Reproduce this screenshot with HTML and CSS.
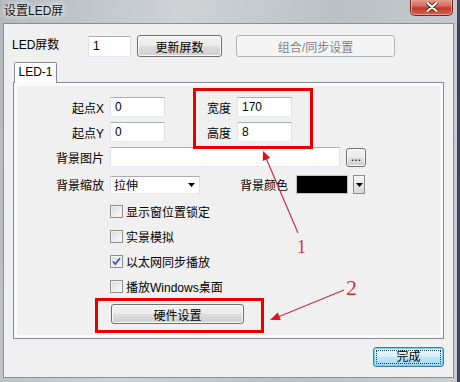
FILE: index.html
```html
<!DOCTYPE html>
<html lang="zh-CN">
<head>
  <meta charset="UTF-8">
  <link rel="stylesheet" href="styles.css">
  <title>设置LED屏</title>
</head>
<body>
  <div class="window">
    <div class="titlebar">
      <span class="title">设置LED屏</span>
      <span class="close-btn">
        <svg width="12" height="10" viewBox="0 0 12 10">
          <path d="M1.5 1 L10.5 9 M10.5 1 L1.5 9" stroke="#5a2018" stroke-width="4" stroke-linecap="round"/>
          <path d="M1.5 1 L10.5 9 M10.5 1 L1.5 9" stroke="#fff" stroke-width="2.2" stroke-linecap="round"/>
        </svg>
      </span>
    </div>

    <div class="client">
      <div class="top-row">
        <span class="top-label">LED屏数</span>
        <input class="field field-count" value="1">
        <button class="btn btn-refresh">更新屏数</button>
        <button class="btn btn-sync" disabled>组合/同步设置</button>
      </div>

      <div class="tabs">
        <div class="tab">LED-1</div>
      </div>

      <div class="panel">
        <div class="row">
          <span class="lbl">起点X</span>
          <input class="field w55" value="0">
          <span class="lbl-size">宽度</span>
          <input class="field w55" value="170">
        </div>
        <div class="row gap5">
          <span class="lbl">起点Y</span>
          <input class="field w55" value="0">
          <span class="lbl-size">高度</span>
          <input class="field w55" value="8">
        </div>
        <div class="row gap5">
          <span class="lbl">背景图片</span>
          <input class="field w230" value="">
          <button class="btn btn-browse">...</button>
        </div>
        <div class="row gap8">
          <span class="lbl">背景缩放</span>
          <div class="combo">
            <span>拉伸</span>
            <svg width="7" height="4" viewBox="0 0 7 4"><path d="M0 0 H7 L3.5 4 Z" fill="#000"/></svg>
          </div>
          <span class="lbl-color">背景颜色</span>
          <div class="swatch"></div>
          <div class="drop">
            <svg width="7" height="4" viewBox="0 0 7 4"><path d="M0 0 H7 L3.5 4 Z" fill="#000"/></svg>
          </div>
        </div>

        <div class="checks">
          <div class="check"><span class="box"></span>显示窗位置锁定</div>
          <div class="check"><span class="box"></span>实景模拟</div>
          <div class="check">
            <span class="box">
              <svg width="11" height="11" viewBox="0 0 11 11"><path d="M2 5.5 L4.3 8 L9 2.2" fill="none" stroke="#3c5a98" stroke-width="1.8"/></svg>
            </span>以太网同步播放
          </div>
          <div class="check"><span class="box"></span>播放Windows桌面</div>
        </div>

        <div class="hw-row">
          <button class="btn btn-hw">硬件设置</button>
        </div>
      </div>

      <div class="footer">
        <button class="btn btn-default"><span class="focus">完成</span></button>
      </div>
    </div>
  </div>

  <!-- red marks drawn over the dialog -->
  <svg class="marks" width="460" height="382" viewBox="0 0 460 382">
    <rect x="194.5" y="89.5" width="117" height="58" fill="none" stroke="#e60000" stroke-width="3"/>
    <rect x="96.5" y="299.5" width="166" height="32" fill="none" stroke="#e60000" stroke-width="3"/>
    <line x1="298" y1="233" x2="266" y2="158" stroke="#c8304c" stroke-width="1.2"/>
    <polygon points="263,151 270.2,157.7 262.8,160.9" fill="#e8101c"/>
    <line x1="344" y1="290" x2="278" y2="317" stroke="#c8304c" stroke-width="1.2"/>
    <polygon points="270,320 280.8,319.9 277.8,312.5" fill="#e8101c"/>
    <text class="mark-num" x="301.5" y="253" font-size="18">1</text>
    <text class="mark-num" x="351.5" y="295" font-size="22">2</text>
  </svg>
</body>
</html>
```

FILE: styles.css
```css
body {
  margin: 0;
  width: 460px;
  height: 382px;
  overflow: hidden;
  position: relative;
  background: #3e4368;
  font-family: "Liberation Sans", "Noto Sans CJK SC", sans-serif;
  font-size: 12px;
  color: #000;
}

/* glass frame */
.window {
  width: 457px;
  height: 382px;
  background: linear-gradient(100deg, #b3b8bd 0%, #cfd3d6 35%, #bbc0c4 65%, #cbced1 100%);
}

.titlebar {
  height: 23px;
  display: flex;
  justify-content: space-between;
  align-items: flex-start;
}

.title {
  margin: 4px 0 0 4px;
  line-height: 15px;
  color: #151515;
  text-shadow: 0 0 5px #fff, 0 0 8px #fff;
}

.close-btn {
  width: 43px;
  height: 17px;
  margin: -1px 4px 0 0;
  box-sizing: border-box;
  border: 1px solid #6b2a20;
  border-top: none;
  border-radius: 0 0 5px 5px;
  background: linear-gradient(#e3a597 0%, #d46a58 45%, #c23a26 55%, #d8604a 100%);
  box-shadow: inset 0 0 0 1px rgba(255, 200, 190, 0.6);
  display: flex;
  align-items: center;
  justify-content: center;
}

/* dialog client area */
.client {
  margin-left: 3px;
  width: 451px;
  height: 355px;
  box-sizing: border-box;
  border: 1px solid #8b9096;
  background: #f0f0f0;
}

.top-row {
  margin: 11px 0 0 8px;
  height: 22px;
  display: flex;
  align-items: center;
}

.top-label {
  width: 76px;
  line-height: 16px;
  margin-top: -2px;
}

.field {
  box-sizing: border-box;
  height: 20px;
  margin: 0;
  padding: 0 0 0 4px;
  border: 1px solid;
  border-color: #abadb3 #dbdfe6 #e3e9ef #e2e3ea;
  background: #fff;
  font-family: inherit;
  font-size: 12px;
  color: #000;
}

.field-count {
  width: 43px;
  height: 21px;
}

.btn {
  box-sizing: border-box;
  height: 22px;
  margin: 0;
  padding: 0;
  border: 1px solid #707070;
  border-radius: 3px;
  background: linear-gradient(#f2f2f2 0%, #ebebeb 50%, #dddddd 51%, #cfcfcf 100%);
  box-shadow: inset 0 0 0 1px #fbfbfb;
  font-family: inherit;
  font-size: 12px;
  color: #000;
}

.btn-refresh {
  width: 85px;
  margin-left: 6px;
}

.btn-sync {
  width: 159px;
  margin-left: 14px;
  border-color: #adb2b5;
  background: #f4f4f4;
  box-shadow: none;
  color: #838383;
}

/* tab control */
.tabs {
  margin: 5px 0 0 10px;
  display: flex;
  position: relative;
  z-index: 1;
  margin-bottom: -1px;
}

.tab {
  width: 43px;
  height: 21px;
  box-sizing: border-box;
  border: 1px solid #898c95;
  border-bottom: none;
  border-radius: 2px 2px 0 0;
  background: #fff;
  text-align: center;
  line-height: 19px;
}

.panel {
  margin-left: 9px;
  width: 431px;
  height: 257px;
  box-sizing: border-box;
  border: 1px solid #898c95;
  background: #f0f0f0;
  box-shadow: inset 0 0 0 3px #fbfbfb;
  padding-top: 14px;
}

.row {
  display: flex;
  align-items: center;
  height: 20px;
}

.gap5 {
  margin-top: 5px;
}

.gap8 {
  margin-top: 8px;
  height: 19px;
}

.lbl {
  width: 90px;
  margin-right: 6px;
  text-align: right;
}

.lbl-size {
  width: 24px;
  margin: 0 6px 0 42px;
}

.w55 {
  width: 55px;
}

.w230 {
  width: 230px;
}

.btn-browse {
  width: 20px;
  height: 19px;
  margin-left: 6px;
  line-height: 12px;
}

.combo {
  box-sizing: border-box;
  width: 90px;
  height: 18px;
  border: 1px solid;
  border-color: #abadb3 #dbdfe6 #e3e9ef #e2e3ea;
  background: #fff;
  display: flex;
  align-items: center;
  justify-content: space-between;
  padding: 0 4px 0 3px;
}

.lbl-color {
  width: 48px;
  margin: 0 8px 0 40px;
}

.swatch {
  box-sizing: border-box;
  width: 52px;
  height: 19px;
  border: 1px solid #c4c4c4;
  background: #000;
  box-shadow: 0 0 0 1px #eeeeee;
}

.drop {
  box-sizing: border-box;
  width: 12px;
  height: 19px;
  margin-left: 5px;
  border: 1px solid #8c8c8c;
  background: linear-gradient(#f6f6f6, #d8d8d8);
  display: flex;
  align-items: center;
  justify-content: center;
}

/* checkboxes */
.checks {
  margin-top: 5px;
  padding-left: 96px;
}

.check {
  height: 25px;
  display: flex;
  align-items: center;
}

.box {
  box-sizing: border-box;
  width: 13px;
  height: 13px;
  margin-right: 3px;
  border: 1px solid #8f8f8f;
  background: linear-gradient(135deg, #d9d9d9, #fbfbfb);
  box-shadow: inset 0 0 0 1px #f2f2f2;
  display: flex;
  align-items: center;
  justify-content: center;
}

.hw-row {
  margin-top: 5px;
  padding-left: 97px;
}

.btn-hw {
  width: 133px;
  height: 20px;
}

.footer {
  margin: 8px 9px 0 0;
  display: flex;
  justify-content: flex-end;
}

.btn-default {
  width: 71px;
  height: 20px;
  border-color: #3c7fb1;
  background: linear-gradient(#eaf6fd 0%, #d9f0fc 50%, #bee6fd 51%, #a7d9f5 100%);
  box-shadow: inset 0 0 0 1px #6fcff0;
  padding: 2px;
}

.focus {
  display: block;
  height: 14px;
  line-height: 13px;
  box-sizing: border-box;
  border: 1px dotted #333;
}

/* annotations */
.marks {
  position: absolute;
  left: 0;
  top: 0;
  pointer-events: none;
}

.mark-num {
  font-family: "Liberation Serif", serif;
  fill: #d0304e;
  text-anchor: middle;
}
```
